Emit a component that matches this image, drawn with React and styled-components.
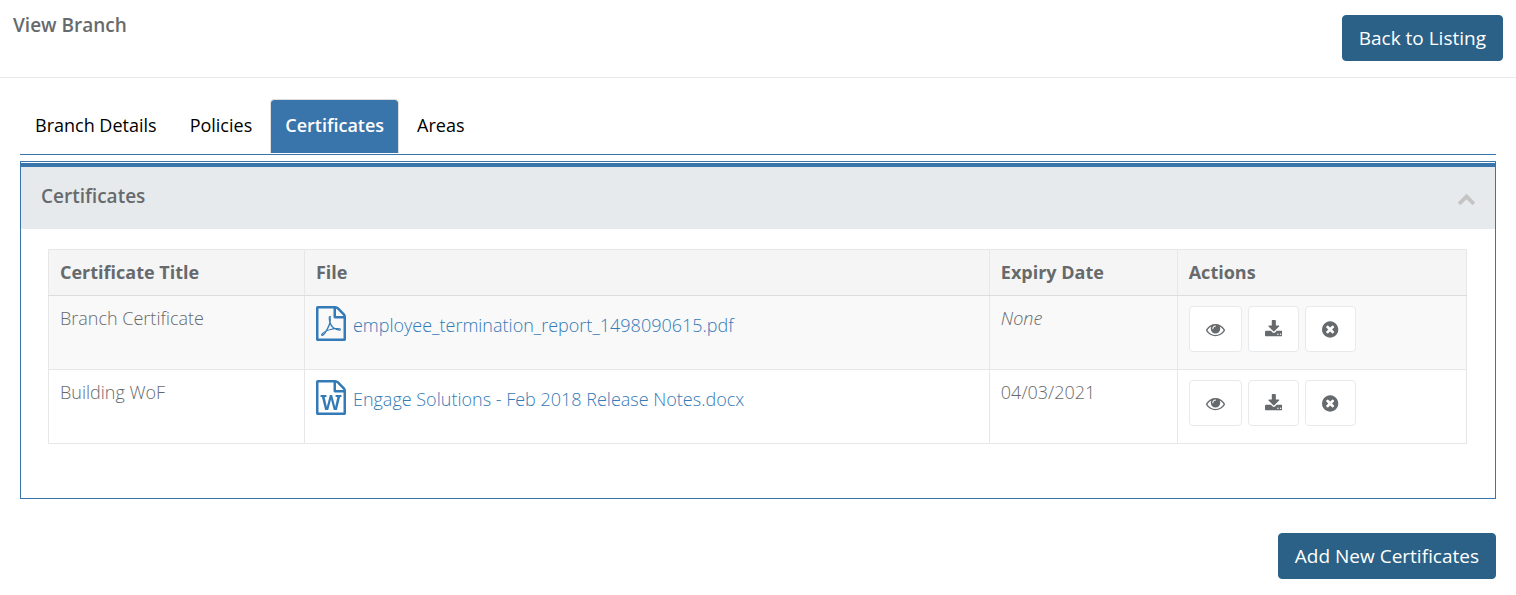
import React, { useState } from 'react';
import styled, { createGlobalStyle } from 'styled-components';

const TABS = ['Branch Details', 'Policies', 'Certificates', 'Areas'];

const CERTIFICATES = [
  {
    title: 'Branch Certificate',
    file: 'employee_termination_report_1498090615.pdf',
    type: 'pdf',
    expiry: null,
  },
  {
    title: 'Building WoF',
    file: 'Engage Solutions - Feb 2018 Release Notes.docx',
    type: 'word',
    expiry: '04/03/2021',
  },
];

const PAGE_PATH =
  'M1468 380q28 28 48 76t20 88v1152q0 40-28 68t-68 28h-1344q-40 0-68-28t-28-68v-1600q0-40 28-68t68-28h896q40 0 88 20t76 48zm-444-244v376h376q-10-29-22-41l-313-313q-12-12-41-22zm384 1528v-1024h-416q-40 0-68-28t-28-68v-416h-768v1536h1280z';

const FILE_PATHS = {
  pdf: 'm-514-593q33 26 84 56 59-7 117-7 147 0 177 49 16 22 2 52 0 1-1 2l-2 2v1q-6 38-71 38-48 0-115-20t-130-53q-221 24-392 83-153 262-242 262-15 0-28-7l-24-12q-1-1-6-5-10-10-6-36 9-40 56-91.5t132-96.5q14-9 23 6 2 2 2 4 52-85 107-197 68-136 104-262-24-82-30.5-159.5t6.5-127.5q11-40 42-40h22q23 0 35 15 18 21 9 68-2 6-4 8 1 3 1 8v30q-2 123-14 192 55 164 146 238zm-576 411q52-24 137-158-51 40-87.5 84t-49.5 74zm398-920q-15 42-2 132 1-7 7-44 0-3 7-43 1-4 4-8-1-1-1-2t-1-2q-1-22-13-36 0 1-1 2v2zm-124 661q135-54 284-81-2-1-13-9.5t-16-13.5q-76-67-127-176-27 86-83 197-30 56-45 83zm646-16q-24-24-140-24 76 28 124 28 14 0 18-1 0-1-2-3z',
  word: 'm-1175-896v107h70l164 661h159l128-485q7-20 10-46 2-16 2-24h4l3 24q1 3 3.5 20t5.5 26l128 485h159l164-661h70v-107h-300v107h90l-99 438q-5 20-7 46l-2 21h-4l-3-21q-1-5-4-21t-5-25l-144-545h-114l-144 545q-2 9-4.5 24.5t-3.5 21.5l-4 21h-4l-2-21q-2-26-7-46l-99-438h90v-107h-300z',
};

// x: left edge of the glyph, width: its advance
const ACTIONS = [
  {
    name: 'View',
    x: 0,
    width: 1792,
    path: 'M1664 960q-152-236-381-353 61 104 61 225 0 185-131.5 316.5t-316.5 131.5-316.5-131.5-131.5-316.5q0-121 61-225-229 117-381 353 133 205 333.5 326.5t434.5 121.5 434.5-121.5 333.5-326.5zm-720-384q0-20-14-34t-34-14q-125 0-214.5 89.5t-89.5 214.5q0 20 14 34t34 14 34-14 14-34q0-86 61-147t147-61q20 0 34-14t14-34zm848 384q0 34-20 69-140 230-376.5 368.5t-499.5 138.5-499.5-139-376.5-368q-20-35-20-69t20-69q140-229 376.5-368t499.5-139 499.5 139 376.5 368q20 35 20 69z',
  },
  {
    name: 'Download',
    x: 64,
    width: 1664,
    path: 'M1344 1344q0-26-19-45t-45-19-45 19-19 45 19 45 45 19 45-19 19-45zm256 0q0-26-19-45t-45-19-45 19-19 45 19 45 45 19 45-19 19-45zm128-224v320q0 40-28 68t-68 28h-1472q-40 0-68-28t-28-68v-320q0-40 28-68t68-28h465l135 136q58 56 136 56t136-56l136-136h464q40 0 68 28t28 68zm-325-569q17 41-14 70l-448 448q-18 19-45 19t-45-19l-448-448q-31-29-14-70 17-39 59-39h256v-448q0-26 19-45t45-19h256q26 0 45 19t19 45v448h256q42 0 59 39z',
  },
  {
    name: 'Delete',
    x: 128,
    width: 1536,
    path: 'M1277 1122q0-26-19-45l-181-181 181-181q19-19 19-45 0-27-19-46l-90-90q-19-19-46-19-26 0-45 19l-181 181-181-181q-19-19-45-19-27 0-46 19l-90 90q-19 19-19 46 0 26 19 45l181 181-181 181q-19 19-19 45 0 27 19 46l90 90q19 19 46 19 26 0 45-19l181-181 181 181q19 19 45 19 27 0 46-19l90-90q19-19 19-46zm387-226q0 209-103 385.5t-279.5 279.5-385.5 103-385.5-103-279.5-279.5-103-385.5 103-385.5 279.5-279.5 385.5-103 385.5 103 279.5 279.5 103 385.5z',
  },
];

const CHEVRON_PATH =
  'M1683 1331l-166 165q-19 19-45 19t-45-19l-531-531-531 531q-19 19-45 19t-45-19l-166-165q-19-19-19-45.5t19-45.5l742-741q19-19 45-19t45 19l742 741q19 19 19 45.5t-19 45.5z';

function CertificateRow({ certificate }) {
  return (
    <tr>
      <Cell>{certificate.title}</Cell>
      <Cell>
        <FileLink href="#">
          <FileIcon viewBox="0 0 1536 1792" aria-hidden="true">
            <path d={PAGE_PATH + FILE_PATHS[certificate.type]} />
          </FileIcon>
          {certificate.file}
        </FileLink>
      </Cell>
      <Cell>{certificate.expiry || <em>None</em>}</Cell>
      <Cell>
        <ActionGroup>
          {ACTIONS.map((action) => (
            <ActionButton key={action.name} type="button" aria-label={action.name}>
              <ActionIcon viewBox={`${action.x} 0 ${action.width} 1792`} aria-hidden="true">
                <path d={action.path} />
              </ActionIcon>
            </ActionButton>
          ))}
        </ActionGroup>
      </Cell>
    </tr>
  );
}

function App() {
  const [activeTab, setActiveTab] = useState('Certificates');
  const [open, setOpen] = useState(true);

  return (
    <>
      <GlobalStyle />
      <PageHeader>
        <PageTitle>View Branch</PageTitle>
        <PrimaryButton type="button">Back to Listing</PrimaryButton>
      </PageHeader>
      <Content>
        <TabBar role="tablist">
          {TABS.map((tab) => (
            <Tab
              key={tab}
              type="button"
              role="tab"
              aria-selected={tab === activeTab}
              $active={tab === activeTab}
              onClick={() => setActiveTab(tab)}
            >
              {tab}
            </Tab>
          ))}
        </TabBar>
        <Panel>
          <PanelHeader>
            <PanelTitle>Certificates</PanelTitle>
            <CollapseButton type="button" aria-label="Collapse" onClick={() => setOpen(!open)}>
              <ChevronIcon viewBox="0 0 1792 1792" aria-hidden="true">
                <path d={CHEVRON_PATH} />
              </ChevronIcon>
            </CollapseButton>
          </PanelHeader>
          {open && (
            <PanelBody>
              <Table>
                <thead>
                  <tr>
                    <HeadCell $width="18.05%">Certificate Title</HeadCell>
                    <HeadCell $width="48.3%">File</HeadCell>
                    <HeadCell $width="13.25%">Expiry Date</HeadCell>
                    <HeadCell>Actions</HeadCell>
                  </tr>
                </thead>
                <tbody>
                  {CERTIFICATES.map((certificate) => (
                    <CertificateRow key={certificate.title} certificate={certificate} />
                  ))}
                </tbody>
              </Table>
            </PanelBody>
          )}
        </Panel>
        <Footer>
          <PrimaryButton type="button">Add New Certificates</PrimaryButton>
        </Footer>
      </Content>
    </>
  );
}

export default App;

const GlobalStyle = createGlobalStyle`
* {
  box-sizing: border-box;
}
body {
  margin: 0;
  background: #fff;
  color: #676a6c;
  font-family: "Open Sans", "Noto Sans", sans-serif;
  font-size: 18px;
  line-height: 24px;
}
button {
  font-family: inherit;
  cursor: pointer;
}
`;

const PageHeader = styled.header`
display: flex;
justify-content: space-between;
align-items: flex-start;
padding: 15px 13px 16px;
border-bottom: 1px solid #e7eaec;
`;

const PageTitle = styled.h1`
margin: -2px 0 0;
font-size: 19px;
font-weight: 600;
line-height: 24px;
`;

const PrimaryButton = styled.button`
height: 46px;
padding: 0 16px 1px;
border: 1px solid #2b6186;
border-radius: 4px;
background: #2b6186;
color: #fff;
font-size: 19px;
line-height: 26px;
`;

const Content = styled.main`
padding: 21px 20px 16px;
`;

const TabBar = styled.div`
display: flex;
gap: 3px;
padding-bottom: 1px;
border-bottom: 1px solid #3974ab;
`;

const Tab = styled.button`
height: 54px;
padding: 0 14px 3px;
border: 1px solid ${({ $active }) => ($active ? '#dddddd' : 'transparent')};
border-bottom: 0;
border-radius: 4px 4px 0 0;
background: ${({ $active }) => ($active ? '#3974ab' : 'transparent')};
background-clip: padding-box;
color: ${({ $active }) => ($active ? '#fff' : '#000')};
font-size: 18px;
font-weight: ${({ $active }) => ($active ? 600 : 400)};
`;

const Panel = styled.section`
min-height: 338px;
margin-top: 6px;
padding-top: 1px;
border: 1px solid #3974ab;
`;

const PanelHeader = styled.div`
display: flex;
justify-content: space-between;
align-items: flex-start;
height: 66px;
padding: 16px 19px 16px 20px;
border-top: 4px solid #3974ab;
background: #e6eaec;
`;

const PanelTitle = styled.h2`
margin: 0;
font-size: 19px;
font-weight: 600;
line-height: 26px;
`;

const CollapseButton = styled.button`
display: flex;
padding: 6px 0 0;
border: 0;
background: none;
`;

const ChevronIcon = styled.svg`
width: 19px;
height: 19px;
fill: #c4c4c4;
`;

const PanelBody = styled.div`
padding: 20px 28px 54px 27px;
`;

const Table = styled.table`
width: 100%;
border-collapse: collapse;
table-layout: fixed;

tbody tr:nth-child(odd) {
  background: #f9f9f9;
}
`;

const HeadCell = styled.th`
width: ${({ $width }) => $width || 'auto'};
height: 46px;
padding: 10px 11px;
border: 1px solid #e7e7e7;
border-bottom-color: #ddd;
background: #f5f5f6;
font-weight: 700;
text-align: left;
vertical-align: top;
`;

const Cell = styled.td`
height: 74px;
padding: 10px 11px 0;
border: 1px solid #e7e7e7;
font-weight: 300;
vertical-align: top;
`;

const FileLink = styled.a`
display: flex;
align-items: flex-start;
gap: 7px;
color: #337ab7;
line-height: 38px;
text-decoration: none;
`;

const FileIcon = styled.svg`
width: 30px;
height: 35px;
fill: currentColor;
`;

const ActionGroup = styled.div`
display: flex;
gap: 6px;
`;

const ActionButton = styled.button`
display: flex;
align-items: center;
height: 46px;
padding: 0 16px;
border: 1px solid #e7eaec;
border-radius: 4px;
background: #fff;
color: #676a6c;
`;

const ActionIcon = styled.svg`
height: 19px;
fill: currentColor;
`;

const Footer = styled.footer`
display: flex;
justify-content: flex-end;
padding-top: 34px;
`;
